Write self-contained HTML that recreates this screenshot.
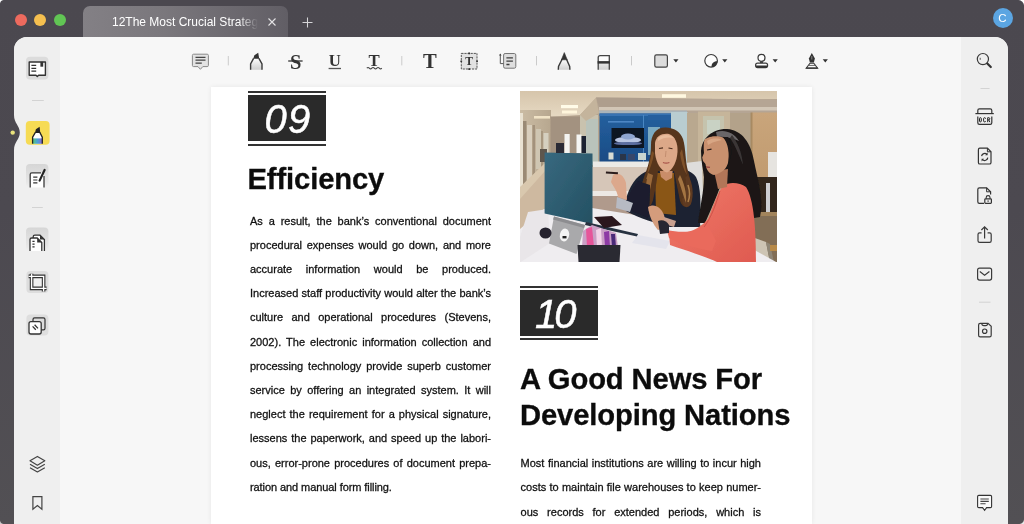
<!DOCTYPE html>
<html>
<head>
<meta charset="utf-8">
<style>
*{box-sizing:border-box;margin:0;padding:0}
html,body{width:1024px;height:524px;overflow:hidden}
body{position:relative;background:linear-gradient(180deg,#4b484f 0%,#4c4950 40%,#525054 100%);will-change:transform;font-family:"Liberation Sans",sans-serif;}
.abs{position:absolute}
/* window corners */
.wc{position:absolute;width:12px;height:12px;background:#fff}
/* traffic lights */
.tl{position:absolute;top:14px;width:12px;height:12px;border-radius:50%}
/* tab */
#tab{position:absolute;left:83px;top:6px;width:205px;height:31px;border-radius:7px 7px 0 0;
 background:linear-gradient(90deg,#838085 0%,#7a777c 40%,#615e65 100%);}
#tabtitle{position:absolute;left:29px;top:8px;width:150px;height:16px;font-size:12px;line-height:16px;color:#fff;white-space:nowrap;overflow:hidden;
 -webkit-mask-image:linear-gradient(90deg,#000 0,#000 126px,transparent 146px);mask-image:linear-gradient(90deg,#000 0,#000 126px,transparent 146px);}
/* main panel */
#panel{position:absolute;left:14px;top:37px;width:994px;height:487px;background:#f7f7f7;border-radius:13px 13px 0 0;overflow:hidden}
#lside{position:absolute;left:0;top:0;width:46px;height:487px;background:#efefef}
#rside{position:absolute;left:947px;top:0;width:47px;height:487px;background:#efefef}
.sep{position:absolute;height:1px;background:#d4d4d4}
.vsep{position:absolute;width:1px;height:10px;top:56px;background:#d0d0d0}
.ibg{position:absolute;width:23px;height:23px;border-radius:4px}
/* page */
#page{will-change:transform;position:absolute;left:211px;top:87px;width:601px;height:437px;background:#fff;box-shadow:0 0 5px rgba(0,0,0,.07)}
.numbox{position:absolute;width:78px;height:46px;background:#2a2a2a;color:#fff;font-style:italic;font-size:40px;line-height:46px;text-align:center;-webkit-text-stroke:0.5px #fff}
.nline{position:absolute;width:78px;height:2px;background:#333}
.h{position:absolute;font-weight:700;font-size:29.2px;color:#0c0c0c;white-space:nowrap;letter-spacing:-0.12px;-webkit-text-stroke:0.3px #0c0c0c}
.col{position:absolute;font-size:11px;line-height:24.22px;color:#111;-webkit-text-stroke:0.28px #111;}
.col div{height:24.22px;text-align:justify;text-align-last:justify;white-space:normal;overflow:visible}
.col div.last{text-align-last:left;letter-spacing:-0.08px}
svg{position:absolute;overflow:visible}
</style>
</head>
<body>
<!-- outer window rounded corners -->
<div class="abs" style="left:0;top:0;width:4px;height:4px;background:radial-gradient(circle at 4px 4px,#4b484f 3.5px,#fff 4.5px)"></div>
<div class="abs" style="left:1018px;top:0;width:6px;height:6px;background:radial-gradient(circle at 0 6px,#4b484f 5.5px,#fff 6.5px)"></div>

<div class="abs" style="left:1019px;top:519px;width:5px;height:5px;background:radial-gradient(circle at 0 0,#525054 4.5px,#e8e8e8 5.5px)"></div>
<div class="abs" style="left:0;top:520px;width:4px;height:4px;background:radial-gradient(circle at 4px 0,#525054 3.5px,#cfcfcf 4.5px)"></div>
<!-- traffic lights -->
<div class="tl" style="left:15px;background:#ed6a5e"></div>
<div class="tl" style="left:34px;background:#f5bf4f"></div>
<div class="tl" style="left:54px;background:#61c554"></div>

<!-- tab -->
<div id="tab"><div id="tabtitle">12The Most Crucial Strategies</div>
<svg style="left:185px;top:12px" width="8" height="8" viewBox="0 0 8 8"><path d="M0.5 0.5L7.5 7.5M7.5 0.5L0.5 7.5" stroke="#e4e3e5" stroke-width="1.1" fill="none"/></svg>
</div>
<svg style="left:302px;top:17px" width="11" height="11" viewBox="0 0 11 11"><path d="M5.5 0.5V10.5M0.5 5.5H10.5" stroke="#d6d5d8" stroke-width="1.05" fill="none"/></svg>

<!-- avatar -->
<div class="abs" style="left:992.5px;top:7.8px;width:20px;height:20px;border-radius:50%;background:#5ba5e2;color:#fff;font-size:11.5px;line-height:20px;text-align:center">C</div>

<!-- main panel -->
<div id="panel">
  <div id="lside"></div>
  <div id="rside"></div>
</div>

<!-- TOOLBAR ICONS (global coords) -->
<svg id="tb" width="1024" height="524" viewBox="0 0 1024 524" style="left:0;top:0;pointer-events:none">
<defs>
<linearGradient id="gfade" x1="0" y1="0" x2="0" y2="1"><stop offset="0" stop-color="#fdfdfd"/><stop offset="1" stop-color="#cfcfcf"/></linearGradient>
</defs>
<g font-family="Liberation Serif, serif" font-weight="700" fill="#333">
<!-- comment -->
<path d="M193.6 54.2H207.2Q208.4 54.2 208.4 55.4V65.4Q208.4 66.6 207.2 66.6H202.8L200.4 69.3L198 66.6H193.6Q192.4 66.6 192.4 65.4V55.4Q192.4 54.2 193.6 54.2Z" fill="#e3e3e3" stroke="#888" stroke-width="1"/>
<path d="M195.5 57.3H205.5M195.5 60.2H205.5M195.5 63.1H201.8" stroke="#444" stroke-width="1.3" fill="none"/>
<!-- separators -->
<path d="M228.3 56V65.4M401.8 56V65.4M536.5 56V65.4M631.5 56V65.4" stroke="#cbcbcb" stroke-width="1" fill="none"/>
<!-- highlighter -->
<path d="M250.6 69.8V64L253.6 58.4H258.9L262 64V69.8Z" fill="url(#gfade)" stroke="none"/>
<path d="M250.6 69.8V64L253.6 58.4M258.9 58.4L262 64V69.8" fill="none" stroke="#3a3a3a" stroke-width="1.4"/>
<path d="M253.2 58.8L254.4 55.3L258.2 52.8L259.2 58.8Z" fill="#333"/>
<!-- S strike -->
<text x="295.7" y="68.6" font-size="20.5" text-anchor="middle">S</text>
<path d="M288.2 61H302.6" stroke="#333" stroke-width="1.3"/>
<!-- U underline -->
<text x="334.7" y="65.9" font-size="16.8" text-anchor="middle">U</text>
<path d="M328.6 68.5H341" stroke="#555" stroke-width="1.3"/>
<!-- T squiggle -->
<text x="374.1" y="65.9" font-size="16.8" text-anchor="middle">T</text>
<path d="M366.8 68.2q1.25 -1.4 2.5 0t2.5 0t2.5 0t2.5 0t2.5 0t2.5 0" stroke="#444" stroke-width="1.1" fill="none"/>
<!-- T bold -->
<text x="429.9" y="67.9" font-size="20.6" text-anchor="middle">T</text>
<!-- text box -->
<rect x="461.3" y="53.4" width="15.7" height="15.6" fill="#e2e2e2" stroke="#555" stroke-width="1" stroke-dasharray="2.2 0.9"/>
<path d="M468.3 52.6h1.7v1.7h-1.7zM468.3 68.2h1.7v1.7h-1.7zM460.4 60.4h1.7v1.7h-1.7zM476.2 60.4h1.7v1.7h-1.7z" fill="#333"/>
<text x="469.2" y="64.8" font-size="11.6" text-anchor="middle">T</text>
<!-- callout -->
<rect x="503.6" y="53.5" width="12.2" height="14.7" rx="1.5" fill="#dedede" stroke="#777" stroke-width="1"/>
<path d="M506.4 57.8H512.9M506.4 61.1H512.9M506.4 64.5H509.5" stroke="#3c3c3c" stroke-width="1.3" fill="none"/>
<path d="M500.3 54.4V63.6H503.4" stroke="#555" stroke-width="1" fill="none"/>
<path d="M499 55.4L500.3 53.4L501.6 55.4Z" fill="#444"/>
<!-- pencil -->
<path d="M558.3 69.8L558.5 66.6L562.2 59.2H566.4L569.7 66.6L569.9 69.8Z" fill="url(#gfade)"/>
<path d="M558.3 69.8L558.5 66.4L562.2 59M566.4 59L569.7 66.4L569.9 69.8" fill="none" stroke="#3a3a3a" stroke-width="1.4"/>
<path d="M564.3 52.6L567.2 59.8H561.4Z" fill="#333" stroke="#333" stroke-width="0.6" stroke-linejoin="round"/>
<!-- eraser -->
<path d="M598.2 69.8V57.6Q598.2 55.6 600.2 55.6H609.3V69.8Z" fill="url(#gfade)"/>
<path d="M598.2 62V57.6Q598.2 55.6 600.2 55.6H609.3V62Z" fill="#fcfcfc"/>
<path d="M598.2 69.8V57.6Q598.2 55.6 600.2 55.6H609.3V69.8" fill="none" stroke="#444" stroke-width="1.3"/>
<rect x="597.6" y="61.1" width="12.3" height="2.5" fill="#333"/>
<!-- square -->
<rect x="654.8" y="54.8" width="12.6" height="12.4" rx="1.6" fill="#dcdcdc" stroke="#444" stroke-width="1.2"/>
<!-- arrows -->
<path d="M673.3 59.3h5.2l-2.6 3.3zM722.2 59.3h5.2l-2.6 3.3zM772.6 59.3h5.2l-2.6 3.3zM822.7 59.3h5.2l-2.6 3.3z" fill="#333"/>
<!-- sticker -->
<circle cx="711.1" cy="60.8" r="6.3" fill="#fdfdfd" stroke="#3a3a3a" stroke-width="1.2"/>
<path d="M711.6 67.1C711.2 63.6 713.6 61 717.4 61.2C717.3 64.4 714.9 66.9 711.6 67.1Z" fill="#333"/>
<!-- stamp -->
<circle cx="761.5" cy="57.8" r="3.5" fill="#fdfdfd" stroke="#3a3a3a" stroke-width="1.2"/>
<path d="M760 61.2h3v2h-3z" fill="#444"/>
<rect x="755.6" y="63.2" width="12" height="4.4" rx="2" fill="#fdfdfd" stroke="#3a3a3a" stroke-width="1.2"/>
<path d="M756 65.6h11.2v0.6q0 1.6 -1.6 1.6h-8q-1.6 0 -1.6 -1.6z" fill="#333"/>
<!-- pen nib -->
<path d="M811.8 53L814.9 58.4L813.9 62.6H809.9L808.9 58.4Z" fill="#333"/>
<path d="M811.8 56V59.5" stroke="#aaa" stroke-width="0.7"/>
<path d="M810 63.2H813.8L817.6 68.2H806.2Z" fill="#fdfdfd" stroke="#3a3a3a" stroke-width="1.1"/>
<path d="M808.2 65.4H815.4" stroke="#555" stroke-width="0.9"/>
<path d="M806.2 67.4H817.6V68.7H806.2Z" fill="#333"/>
</g>
</svg>

<!-- SIDEBAR ICONS (global coords) -->
<svg id="sb" width="1024" height="524" viewBox="0 0 1024 524" style="left:0;top:0;pointer-events:none">
<defs>
<linearGradient id="ibg" x1="0" y1="0" x2="0" y2="1"><stop offset="0" stop-color="#d6d6d6"/><stop offset="0.75" stop-color="#e6e6e6"/><stop offset="1" stop-color="#efefef"/></linearGradient>
<linearGradient id="rain" x1="0" y1="0" x2="1" y2="0"><stop offset="0" stop-color="#58c878"/><stop offset="0.5" stop-color="#4aa0d8"/><stop offset="1" stop-color="#8a6ad0"/></linearGradient>
</defs>
<!-- notch on left edge -->
<path d="M14 115C14 123.5 19.8 125.5 19.8 132.6C19.8 139.8 14 141.5 14 150.5Z" fill="#4c4950"/>
<circle cx="12.7" cy="132.6" r="2.2" fill="#e9e27c"/>
<!-- separators -->
<path d="M32 100.5H43.8M32 207.5H42.8M980.5 88.5H989.6M979 302.2H990.5" stroke="#d3d3d3" stroke-width="1" fill="none"/>

<!-- 1 book -->
<rect x="26" y="56.8" width="22.4" height="22.6" rx="4" fill="#dcdcdc"/>
<path d="M29.2 62H45.4V75.3H38.6L37.3 76.6L36 75.3H29.2Z" fill="#fff" stroke="#333" stroke-width="1.4" stroke-linejoin="round"/>
<path d="M31.4 65.4H36.2M31.4 68.3H36.2M31.4 71.2H36.2" stroke="#333" stroke-width="1.2"/>
<rect x="40.4" y="61.8" width="2.8" height="4.9" fill="#333"/>

<!-- 2 highlighter active -->
<rect x="25.8" y="120.9" width="23.8" height="23.8" rx="4" fill="#f6db54"/>
<path d="M32.6 143.8V137.2L35.4 132.4H39.8L42.3 137.2V143.8Z" fill="#fff"/>
<rect x="33" y="138.4" width="9" height="5.4" fill="url(#rain)"/>
<path d="M32.6 143.8V137.2L35.4 132.4M39.8 132.4L42.3 137.2V143.8" fill="none" stroke="#222" stroke-width="1.3"/>
<path d="M34.9 132.9L35.9 129.3L39.6 126.8L40.3 132.9Z" fill="#222"/>

<!-- 3 note/pen -->
<rect x="26" y="164" width="22.4" height="23.4" rx="4" fill="url(#ibg)"/>
<path d="M30.2 187.4V174.4Q30.2 172.8 31.8 172.8H44V187.4Z" fill="#fff"/>
<path d="M30.2 187.4V174.4Q30.2 172.8 31.8 172.8H41M44 176V187.4" fill="none" stroke="#3a3a3a" stroke-width="1.3"/>
<path d="M33.2 177.1H37.4M33.2 180H37.4M33.2 182.9H37.4" stroke="#333" stroke-width="1.2"/>
<path d="M39.6 180.6L44.6 170" stroke="#222" stroke-width="2.2" stroke-linecap="round"/>

<!-- 4 pages -->
<rect x="26" y="227.6" width="22.4" height="23.4" rx="4" fill="url(#ibg)"/>
<path d="M33.2 251V236.8Q33.2 235.2 34.8 235.2H40L44.4 239.6V251Z" fill="#fff"/>
<path d="M33.2 238V236.8Q33.2 235.2 34.8 235.2H40L44.4 239.6V251" fill="none" stroke="#333" stroke-width="1.3"/>
<path d="M40 235.2L44.4 239.6H40Z" fill="#333"/>
<path d="M30 251V239.6Q30 238 31.6 238H37.2L41.8 242.6V251Z" fill="#fff"/>
<path d="M30 251V239.6Q30 238 31.6 238H37.2L41.8 242.6V251" fill="none" stroke="#333" stroke-width="1.3"/>
<path d="M37.2 238L41.8 242.6H37.2Z" fill="#333"/>
<path d="M32.4 241.3H34.6M32.4 244.1H34.6M32.4 246.9H34.6" stroke="#333" stroke-width="1.2"/>

<!-- 5 crop -->
<rect x="26.4" y="271" width="22" height="22" rx="4" fill="#dddddd"/>
<rect x="32.5" y="277.3" width="10.2" height="10.2" fill="#f0f0f0"/>
<path d="M28.6 276.4H43.6V291.4M31.6 273.8V288.4H46.6" fill="none" stroke="#333" stroke-width="3.6" stroke-linejoin="miter"/>
<path d="M28.6 276.4H43.6V291.4M31.6 273.8V288.4H46.6" fill="none" stroke="#fff" stroke-width="1.4" stroke-linejoin="miter"/>

<!-- 6 copy/overlay -->
<rect x="26.4" y="314.4" width="22" height="21" rx="4" fill="#dedede"/>
<rect x="33" y="317.8" width="12" height="12" rx="1.6" fill="#dcdcdc" stroke="#333" stroke-width="1.2"/>
<rect x="29" y="321.6" width="12.2" height="12.4" rx="2" fill="#fff" stroke="#333" stroke-width="1.3"/>
<path d="M32.6 326.4L35.8 329.8M34.6 324.8L38 328.4" stroke="#333" stroke-width="1.3"/>

<!-- layers -->
<path d="M37.4 456.4L44.8 460.8L37.4 465.2L30 460.8Z" fill="none" stroke="#444" stroke-width="1.2" stroke-linejoin="round"/>
<path d="M30 464.3L37.4 468.6L44.8 464.3M30 467.7L37.4 472L44.8 467.7" fill="none" stroke="#444" stroke-width="1.2" stroke-linejoin="round"/>
<!-- bookmark -->
<path d="M32.9 496.6H41.9V509.2L37.4 505.6L32.9 509.2Z" fill="none" stroke="#444" stroke-width="1.2" stroke-linejoin="miter"/>

<!-- RIGHT: search -->
<circle cx="982.9" cy="59.1" r="5.6" fill="none" stroke="#3a3a3a" stroke-width="1.2"/>
<path d="M987.3 63.5L990.8 67" stroke="#333" stroke-width="2.2" stroke-linecap="round"/>
<path d="M980.2 57.8V59.8" stroke="#444" stroke-width="0.9"/>
<!-- OCR -->
<path d="M975.4 113.6H993.8" stroke="#333" stroke-width="1.2"/>
<path d="M977.8 113.6V110.4Q977.8 108.8 979.4 108.8H990.2Q991.8 108.8 991.8 110.4V113.6" fill="none" stroke="#333" stroke-width="1.2"/>
<path d="M977.8 116.4V122.8Q977.8 124.4 979.4 124.4H990.2Q991.8 124.4 991.8 122.8V116.4" fill="none" stroke="#333" stroke-width="1.2"/>
<path d="M979.5 118.5Q979.5 117.7 980.4 117.7Q981.3 117.7 981.3 118.5V121.1Q981.3 121.9 980.4 121.9Q979.5 121.9 979.5 121.1ZM985.6 118.7Q985.6 117.7 984.6 117.7Q983.6 117.7 983.6 118.7V120.9Q983.6 121.9 984.6 121.9Q985.6 121.9 985.6 120.9M987.7 122.2V117.7H988.8Q989.8 117.7 989.8 118.8Q989.8 119.8 988.8 119.8H987.7M988.7 119.8L989.9 122.2" fill="none" stroke="#222" stroke-width="1"/>
<!-- convert -->
<path d="M979.8 148.2H987.4L991 151.8V162.4Q991 164 989.4 164H979.8Q978.4 164 978.4 162.4V149.8Q978.4 148.2 979.8 148.2Z" fill="none" stroke="#333" stroke-width="1.2"/>
<path d="M987.4 148.2V151.8H991" fill="none" stroke="#333" stroke-width="1"/>
<path d="M981.6 156.2A3.2 3.2 0 0 1 987 154.4M987.8 157.6A3.2 3.2 0 0 1 982.4 159.6" fill="none" stroke="#333" stroke-width="1.2"/>
<path d="M987.6 152.6V155.2H985.2ZM981.6 161.4V158.8H984Z" fill="#333"/>
<!-- protect -->
<path d="M984 203.4H979.4Q977.8 203.4 977.8 201.8V189.4Q977.8 187.8 979.4 187.8H986.6L990.6 191.8V194.6" fill="none" stroke="#333" stroke-width="1.2"/>
<path d="M986.6 187.8V191.8H990.6" fill="none" stroke="#333" stroke-width="1"/>
<rect x="984.8" y="198.8" width="6.6" height="4.6" rx="0.8" fill="none" stroke="#333" stroke-width="1.2"/>
<path d="M986.2 198.8V197.4Q986.2 195.6 988.1 195.6Q990 195.6 990 197.4V198.8" fill="none" stroke="#333" stroke-width="1.1"/>
<rect x="987.5" y="200.4" width="1.2" height="1.4" fill="#333"/>
<!-- share -->
<path d="M981.6 232.8H979.6Q978 232.8 978 234.4V240.8Q978 242.4 979.6 242.4H989.6Q991.2 242.4 991.2 240.8V234.4Q991.2 232.8 989.6 232.8H987.6" fill="none" stroke="#3a3a3a" stroke-width="1.2"/>
<path d="M984.6 238.6V227M981.4 230L984.6 226.8L987.8 230" fill="none" stroke="#3a3a3a" stroke-width="1.2"/>
<!-- mail -->
<rect x="977.6" y="268.1" width="14" height="12" rx="2" fill="none" stroke="#3a3a3a" stroke-width="1.2"/>
<path d="M979.8 271.6L984.6 275.2L989.4 271.6" fill="none" stroke="#3a3a3a" stroke-width="1.2"/>
<!-- save -->
<path d="M980.2 323.4H988L991.2 326.2V335.2Q991.2 336.8 989.6 336.8H980.2Q978.6 336.8 978.6 335.2V325Q978.6 323.4 980.2 323.4Z" fill="none" stroke="#3a3a3a" stroke-width="1.2"/>
<path d="M981.8 323.4Q981.8 325.6 984 325.6H985.6Q987.6 325.6 987.6 323.4" fill="none" stroke="#3a3a3a" stroke-width="1.1"/>
<circle cx="984.7" cy="331.2" r="2.2" fill="none" stroke="#3a3a3a" stroke-width="1.2"/>
<!-- comment bottom right -->
<path d="M978.8 495.4H990.4Q991.6 495.4 991.6 496.6V506.4Q991.6 507.6 990.4 507.6H986.6L984.6 510.4L982.6 507.6H978.8Q977.6 507.6 977.6 506.4V496.6Q977.6 495.4 978.8 495.4Z" fill="#fafafa" stroke="#333" stroke-width="1.1"/>
<path d="M980.4 499H988.8M980.4 501.4H988.8M980.4 503.8H985.6" stroke="#444" stroke-width="1.1"/>
</svg>

<!-- PAGE -->
<div id="page">
  <!-- coordinates relative to page (211,87) -->
  <div class="nline" style="left:37px;top:4.3px"></div>
  <div class="numbox" style="left:37px;top:8.4px"><span style="position:relative;left:1px;top:1px;letter-spacing:1.2px">09</span></div>
  <div class="nline" style="left:37px;top:56.5px"></div>
  <div class="h" style="left:36.5px;top:74.6px;line-height:34px">Efficiency</div>
  <div class="col" style="left:39px;top:121.5px;width:241px">
    <div>As a result, the bank’s conventional document</div>
    <div>procedural expenses would go down, and more</div>
    <div>accurate information would be produced.</div>
    <div>Increased staff productivity would alter the bank’s</div>
    <div>culture and operational procedures (Stevens,</div>
    <div>2002). The electronic information collection and</div>
    <div>processing technology provide superb customer</div>
    <div>service by offering an integrated system. It will</div>
    <div>neglect the requirement for a physical signature,</div>
    <div>lessens the paperwork, and speed up the labori-</div>
    <div>ous, error-prone procedures of document prepa-</div>
    <div class="last">ration and manual form filling.</div>
  </div>

  <div id="photo" class="abs" style="left:309px;top:3.5px;width:257px;height:171.5px;background:#b9a892;overflow:hidden">
<svg width="257" height="171.5" viewBox="0 0 257 171.5" style="left:0;top:0">
<defs>
<filter id="b1" x="-5%" y="-5%" width="110%" height="110%"><feGaussianBlur stdDeviation="0.7"/></filter>
<filter id="b2" x="-10%" y="-10%" width="120%" height="120%"><feGaussianBlur stdDeviation="1.6"/></filter>
<linearGradient id="ceil" x1="0" y1="0" x2="0" y2="1"><stop offset="0" stop-color="#d6c5ab"/><stop offset="1" stop-color="#e6d9c3"/></linearGradient>
<linearGradient id="hall" x1="0" y1="0" x2="1" y2="0"><stop offset="0" stop-color="#cbbca4"/><stop offset="1" stop-color="#b7a78f"/></linearGradient>
<linearGradient id="blue" x1="0" y1="0" x2="0" y2="1"><stop offset="0" stop-color="#23609f"/><stop offset="1" stop-color="#1b4b84"/></linearGradient>
<linearGradient id="teal" x1="0" y1="0" x2="1" y2="1"><stop offset="0" stop-color="#38697f"/><stop offset="1" stop-color="#245062"/></linearGradient>
<linearGradient id="door" x1="0" y1="0" x2="0" y2="1"><stop offset="0" stop-color="#c9a57b"/><stop offset="1" stop-color="#bb9468"/></linearGradient>
<linearGradient id="coral" x1="0" y1="0" x2="1" y2="1"><stop offset="0" stop-color="#f07a68"/><stop offset="1" stop-color="#df5a50"/></linearGradient>
<linearGradient id="hair1" x1="0" y1="0" x2="1" y2="0"><stop offset="0" stop-color="#4a2c18"/><stop offset="0.5" stop-color="#7a4c28"/><stop offset="1" stop-color="#4a2c18"/></linearGradient>
</defs>
<rect width="257" height="171.5" fill="#b6a58f"/>
<g filter="url(#b1)">
<!-- ceiling -->
<polygon points="0,0 257,0 257,8 150,9 76,7 60,24 30,26 0,20" fill="url(#ceil)"/>
<!-- left hallway -->
<rect x="0" y="19" width="31" height="110" fill="url(#hall)"/>
<rect x="0" y="22" width="3" height="95" fill="#e9e2d2"/>
<rect x="3" y="30" width="3.5" height="85" fill="#9a8a74"/>
<rect x="7" y="34" width="5" height="60" fill="#d9cfbd"/>
<rect x="12.5" y="34" width="2.5" height="70" fill="#a3927b"/>
<rect x="16" y="38" width="5" height="40" fill="#cfc6b2"/>
<rect x="21" y="40" width="2" height="40" fill="#a89880"/>
<rect x="23.5" y="42" width="5" height="25" fill="#d5d0c0"/>
<rect x="20" y="58" width="7" height="13" fill="#5d574e"/>
<polygon points="0,100 25,76 25,130 0,140" fill="#ceb9a0"/>
<polygon points="0,96 25,72 25,80 0,108" fill="#d9c8ae"/>
<!-- ceiling lights -->
<rect x="41" y="14" width="17" height="3.2" fill="#fffbe8"/>
<rect x="42" y="19.5" width="15" height="3" fill="#fff6dc"/>
<rect x="14" y="25" width="16" height="2.6" fill="#f1e3c6"/>
<rect x="142" y="3.2" width="24" height="3.6" fill="#fff8e0"/>
<!-- pillar -->
<rect x="30.5" y="25.5" width="30" height="37" fill="#a39280"/>
<rect x="60" y="24" width="18" height="50" fill="#c9c2ae"/>
<rect x="66" y="28" width="12" height="46" fill="#b9c3bb"/>
<!-- soffit -->
<polygon points="76,6.5 257,8.5 257,22 79,22" fill="#b5a594"/>
<polygon points="76,6.5 130,7 130,16 79,16" fill="#ae9e8d"/>
<polygon points="60,24 76,6.5 79,22 66,30" fill="#c4b49c"/>
<rect x="79" y="16" width="178" height="3.5" fill="#d2c6b6"/>
<rect x="79" y="19.5" width="88" height="3" fill="#a9b4ba"/>
<!-- blue wall -->
<rect x="79.5" y="22.5" width="71.5" height="49" fill="url(#blue)"/>
<rect x="79.5" y="22.5" width="71.5" height="2.5" fill="#3873b2"/>
<rect x="88" y="30" width="26" height="1.6" fill="#4d86c4"/>
<rect x="123" y="24" width="1" height="47" fill="#4a86c2"/>
<!-- glass panel right of blue -->
<rect x="151" y="21" width="16.5" height="51" fill="#b9cdd1"/>
<rect x="128" y="36" width="12" height="28" fill="#8db9c9" opacity="0.85"/>
<rect x="128" y="24" width="23" height="5" fill="#265f9e"/>
<!-- TV -->
<rect x="91.5" y="37" width="32.5" height="20" fill="#0d1424"/>
<ellipse cx="108" cy="49" rx="13" ry="3.2" fill="#b9c6e2"/>
<ellipse cx="108" cy="45.5" rx="7" ry="3" fill="#8fa6d0"/>
<ellipse cx="108" cy="52.5" rx="14" ry="1.6" fill="#5b6ea0"/>
<!-- items on counter -->
<rect x="88.5" y="61.5" width="5" height="7" fill="#d8dcd4"/>
<rect x="100" y="63" width="6" height="6" fill="#2a3448"/>
<rect x="108" y="63" width="7" height="6" fill="#39466a"/>
<rect x="118" y="62" width="8" height="7" fill="#c8d4d0"/>
<!-- counter -->
<rect x="73" y="70.5" width="60" height="5.5" fill="#eceae6"/>
<rect x="72" y="76" width="60" height="25" fill="#d6c6b8"/>
<rect x="72" y="100" width="60" height="5" fill="#ece8e4"/>
<rect x="72" y="105" width="60" height="25" fill="#b09a8c"/>
<!-- right wall, door frame -->
<rect x="167" y="22" width="90" height="110" fill="#b9a88f"/>
<rect x="178" y="20.5" width="32" height="60" fill="#c6b59a"/>
<rect x="183" y="25" width="21" height="50" fill="#c5c3ad"/>
<rect x="187" y="29" width="13" height="14" fill="#c9d2c4"/>
<rect x="210" y="22" width="22" height="60" fill="#b3a28a"/>
<!-- wood door -->
<rect x="232" y="21.5" width="25" height="110" fill="url(#door)"/>
<rect x="230.5" y="21.5" width="2" height="105" fill="#a88a62"/>
<!-- right side: white cabinet + dark furniture + floor -->
<rect x="248" y="61" width="9" height="26" fill="#e6e4e0"/>
<rect x="236" y="86" width="21" height="40" fill="#33281e"/>
<rect x="246" y="92" width="4" height="30" fill="#cfcfd2"/>
<rect x="228" y="124" width="29" height="48" fill="#826e56"/>
<rect x="228" y="121" width="29" height="4" fill="#a2845c"/>
<polygon points="232,146 246,151 250,171.5 232,171.5" fill="#cdc4b4"/>
<polygon points="246,151 250,153 254,171.5 250,171.5" fill="#8f8676"/>
<rect x="250" y="154" width="7" height="6" fill="#b88a4a"/>
</g>

<!-- teal divider + desk -->
<g filter="url(#b1)">
<polygon points="0,138 24,118 72,117 140,128 200,140 257,171.5 0,171.5" fill="#efedf0"/>
<polygon points="0,171.5 0,146 8,121 28,118 30,152" fill="#e9e6e9"/>
<polygon points="24.6,61.5 72.5,62.5 72.5,133 24.6,122.5" fill="url(#teal)"/>
<rect x="44.5" y="43" width="5.2" height="19" fill="#f3f3f1"/>
<rect x="56.5" y="43.5" width="5" height="18.5" fill="#f5f5f3"/>
<rect x="61.5" y="45" width="4.5" height="17" fill="#1d2230"/>
<rect x="36" y="52" width="8" height="10" fill="#2c2c34"/>
<!-- notebook / dark line -->
<polygon points="66,131 118,143 117,145.5 65,134" fill="#27303f"/>
<polygon points="74,126 92,125 102,134 84,137" fill="#2a151c"/>
<!-- laptop stand -->
<polygon points="34,125.5 65,134 56.5,163 29,152.5" fill="#a9a9ab"/>
<polygon points="34,125.5 65,134 64,137 33,128.5" fill="#8d8d90"/>
<ellipse cx="44.5" cy="144" rx="4.6" ry="6.5" fill="#f4f4f4" transform="rotate(12 44.5 144)"/>
<rect x="42.5" y="145" width="4" height="2.4" fill="#222"/>
<!-- mouse -->
<ellipse cx="25.5" cy="142" rx="6" ry="5.6" fill="#26242e"/>
<!-- pen cup -->
<polygon points="63,140 72,134 96,142 98,156 62,156" fill="#c99fc5"/>
<polygon points="66,138 72,136 74,156 67,156" fill="#e6559a"/>
<polygon points="76,139 81,137 82,156 77,156" fill="#f2d4e8"/>
<polygon points="84,141 89,140 90,156 85,156" fill="#8d3aa4"/>
<polygon points="91,143 95,143 96,156 92,156" fill="#4a2a78"/>
<polygon points="57.5,154 100.5,154 99.5,171.5 58.5,171.5" fill="#2c2b33"/>
<!-- papers -->
<polygon points="118,144 150,150 146,158 112,152" fill="#e4e4ec"/>
</g>

<!-- white panel between women -->
<g filter="url(#b1)">
<polygon points="165,72 182,70 184,134 176,134 170,100 165,92" fill="#dedddb"/>
</g>
<!-- woman 1 -->
<g filter="url(#b1)">
<!-- jacket -->
<path d="M116,88 C126,78 136,76 146,78 C158,76 170,78 176,86 C181,96 181,112 180,136 L150,136 C136,132 120,128 106,120 C104,110 108,98 116,88Z" fill="#1c2131"/>
<!-- top -->
<path d="M135,82 L154,82 L156,124 L136,122Z" fill="#8a5719"/>
<!-- neck -->
<path d="M139,76 L153,76 L152,87 L146,90 L141,86Z" fill="#c98d69"/>
<!-- hair -->
<path d="M146,36.5 C136,36 131,44 131,54 C131,66 128,76 124,86 C120,98 121,110 126,117 C130,118 133,112 134,104 C136,96 137,88 138,80 L154,80 C156,90 158,100 160,110 C162,116 166,118 169,112 C172,102 171,90 168,80 C165,70 166,58 163,48 C160,40 154,37 146,36.5Z" fill="#56341c"/>
<path d="M128,82 C124,94 123,106 127,114 C129,104 131,94 133,84Z" fill="#9a6a3a"/>
<path d="M124,88 C119,96 119,108 123,116 C127,120 131,116 130,108 C126,104 125,96 127,88Z" fill="#5a371e"/>
<path d="M168,84 C173,92 174,104 171,113 C167,119 162,116 162,108 C166,104 167,94 165,86Z" fill="#5e3a20"/>
<path d="M125,98 C123,104 124,110 126,114" stroke="#a87a46" stroke-width="1.6" fill="none"/>
<path d="M168,94 C170,100 170,106 168,111" stroke="#ac7e4a" stroke-width="1.6" fill="none"/>
<path d="M160,84 C164,92 167,102 166,112 C163,104 161,96 158,88Z" fill="#a47442"/>
<path d="M132,60 C130,70 128,78 127,84 C130,78 133,70 134,62Z" fill="#7c5028"/>
<path d="M162,58 C164,68 165,76 167,84 C163,78 161,70 160,62Z" fill="#80522a"/>
<!-- face -->
<path d="M135,52 C136,45 142,42 149,43 C155,45 158,52 157.5,61 C157,70 153,79 147,81.5 C141,80 136,72 135,62Z" fill="#dca888"/>
<path d="M138,47 C142,43 150,43 154,47 C150,46 143,46 138,50Z" fill="#e8bc9c"/>
<path d="M139,57.5 l4,-0.6 M148.5,57 l4,0.8" stroke="#4a2c1c" stroke-width="1.1" fill="none"/>
<path d="M143,71.5 q3,1.4 6.4,0" stroke="#a8544a" stroke-width="1.3" fill="none"/>
<path d="M146,60 l-0.6,6" stroke="#c08a6c" stroke-width="0.9" fill="none"/>
<!-- arm + hand with pen -->
<path d="M118,90 C112,98 106,108 104,117 L128,127 C130,116 130,104 130,94Z" fill="#1a1f2e"/>
<path d="M97,106 L113,112 L110,121 L96,117Z" fill="#b7bac3"/>
<path d="M93,84 C98,81 104,84 106,92 L107,109 L98,106 C97,99 93,95 91,91Z" fill="#dca88c"/>
<rect x="86" y="80.5" width="12" height="2" fill="#2a1c1c" transform="rotate(4 86 80.5)"/>
</g>

<!-- woman 2 -->
<g filter="url(#b1)">
<!-- hair back -->
<path d="M181,60 C182,46 194,37.5 207,38 C222,39 231,52 234,70 C238,90 244,108 240,126 L228,128 C226,112 220,100 212,94 L200,96 C196,108 190,120 185,132 L178,132 C180,116 184,100 184,86 C183,78 181,70 181,60Z" fill="#1a1615"/>
<path d="M196,41 C204,38 214,41 219,50 C212,47 204,45 197,46Z" fill="#6b6668"/>
<path d="M212,44 C218,52 222,62 223,74 C219,64 215,54 210,47Z" fill="#3a3536"/>
<!-- coral top -->
<path d="M203,95 C210,90 220,92 226,96 C234,108 236,138 236,171.5 L198,171.5 C186,166 168,160 150,154 L149,142 C164,144 178,140 188,128 C193,116 197,102 203,95Z" fill="url(#coral)"/>
<path d="M147,139 C160,142 176,142 188,134 L196,150 L192,160 C176,158 160,152 149,147Z" fill="#ea6a5c"/>
<path d="M200,100 C196,112 192,126 184,136" stroke="#cf5248" stroke-width="1" fill="none"/>
<!-- neck/face -->
<path d="M194,80 L208,78 L207,96 L198,98Z" fill="#b27658"/>
<path d="M184.5,48.5 C190,44.5 198,44.5 203,46.5 C208,50 210,58 208.5,70 C207,78 202,82 194,84 C189,83 186,78 185.5,73 L183,70 L182.2,66.5 L184,62 C183.5,57 183.6,52 184.5,48.5Z" fill="#c8906e"/>
<path d="M187,50 C192,47 198,47 202,49 C198,50 192,51 188,54Z" fill="#d8a684"/>
<path d="M203,46 C208,52 210,62 208,74 C212,66 213,54 208,46Z" fill="#1a1615"/>
<path d="M187,59 l4.5,-0.8" stroke="#2a1a16" stroke-width="1.2" fill="none"/>
<path d="M186,76 l4,0.3" stroke="#9a4a44" stroke-width="1.3" fill="none"/>
<!-- hand + watch -->
<path d="M128,116 C134,112 141,116 144,124 L147,136 L138,139 C133,133 129,125 128,116Z" fill="#d49c7c"/>
<path d="M144,126 l12,4 l-2,6 l-10,-3Z" fill="#c8a090"/>
<path d="M138,130 C142,128 147,130 149,134 L149,142 L140,143Z" fill="#272731"/>
</g>
</svg>
</div>

  <div class="nline" style="left:309px;top:198.9px"></div>
  <div class="numbox" style="left:309px;top:203px"><span style="position:relative;left:-3.2px;top:0.5px"><span style="letter-spacing:-3px">1</span>0</span></div>
  <div class="nline" style="left:309px;top:251px"></div>
  <div class="h" style="left:309px;top:275.3px;line-height:35.6px">A Good News For<br>Developing Nations</div>
  <div class="col" style="left:309.6px;top:364.2px;width:240.4px">
    <div>Most financial institutions are willing to incur high</div>
    <div>costs to maintain file warehouses to keep numer-</div>
    <div>ous records for extended periods, which is</div>
  </div>
</div>

</body>
</html>
